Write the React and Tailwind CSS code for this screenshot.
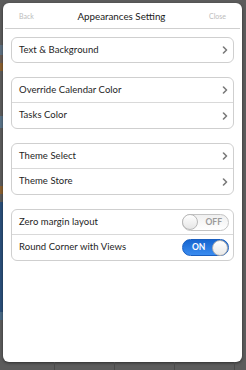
import React from "react";

const Chevron = () => (
  <svg width="6" height="8" viewBox="0 0 6 8" className="shrink-0">
    <path d="M1.5 1 L4.5 4 L1.5 7" fill="none" stroke="#7a7a7a" strokeWidth="1.6" strokeLinecap="round" strokeLinejoin="round" />
  </svg>
);

const Row = ({ label, last, h = "h-[25px]" }) => (
  <div className={`flex items-center justify-between ${h} pl-[7px] pr-[5px] ${last ? "" : "border-b border-[#d9d9d9]"}`}>
    <span className="text-[9.5px] text-[#1e1e1e] tracking-[0.05px]">{label}</span>
    <Chevron />
  </div>
);

const Toggle = ({ on }) =>
  on ? (
    <div className="flex items-center justify-between w-[47px] h-[17px] rounded-full bg-gradient-to-b from-[#1565d0] to-[#3a8cf0] border border-[#1a5fc0] pl-[9px] pr-0">
      <span className="text-[8.5px] font-bold text-white leading-none">ON</span>
      <div className="w-[16px] h-[16px] rounded-full bg-gradient-to-b from-white to-[#e8e8e8] border border-[#b0b0b0]" />
    </div>
  ) : (
    <div className="flex items-center justify-between w-[47px] h-[17px] rounded-full bg-gradient-to-b from-[#f0f0f0] to-white border border-[#c4c4c4] pr-[6px]">
      <div className="w-[16px] h-[16px] -ml-px rounded-full bg-gradient-to-b from-white to-[#e6e6e6] border border-[#b8b8b8]" />
      <span className="text-[8.5px] font-bold text-[#9a9a9a] leading-none">OFF</span>
    </div>
  );

const SwitchRow = ({ label, on, last }) => (
  <div className={`flex items-center justify-between h-[25px] pl-[7px] pr-[4px] ${last ? "" : "border-b border-[#d9d9d9]"}`}>
    <span className="text-[9.5px] text-[#1e1e1e] tracking-[0.05px]">{label}</span>
    <Toggle on={on} />
  </div>
);

const Group = ({ children }) => (
  <div className="mx-[8px] border border-[#cfcfcf] rounded-[6px] bg-white overflow-hidden">{children}</div>
);

export default function App() {
  return (
    <div
      className="w-[246px] h-[370px] bg-[#5c5c5c] flex flex-col overflow-hidden"
      style={{ fontFamily: "Lato, 'Noto Sans', sans-serif" }}
    >
      <div className="h-[3px] shrink-0" />
      <div className="flex flex-1 min-h-0">
        <div className="w-[3px] shrink-0 flex flex-col">
          <div className="h-[42px]" />
          <div className="h-[10px] bg-[#5e7080]" />
          <div className="h-[8px] bg-[#6a5d55]" />
          <div className="h-[8px] bg-[#8a6030]" />
          <div className="h-[45px]" />
          <div className="h-[12px] bg-[#5a7488]" />
          <div className="h-[58px]" />
          <div className="h-[8px] bg-[#8a6030]" />
          <div className="h-[8px]" />
          <div className="h-[110px] bg-[#2a4f7a]" />
          <div className="h-[8px] bg-[#4a6a86]" />
        </div>
        <div className="w-[239px] shrink-0 bg-white rounded-[6px] shadow-[0_1px_3px_rgba(0,0,0,0.5)] flex flex-col">
          <div className="flex items-center justify-between h-[26px] px-[14px] mx-[2px] border-b border-[#cfcfcf]">
            <span className="text-[7px] text-[#bcbcbc] pt-[2px]">Back</span>
            <span className="text-[9.8px] text-[#1a1a1a] pt-[2px]">Appearances Setting</span>
            <span className="text-[7px] text-[#bcbcbc] pt-[2px]">Close</span>
          </div>
          <div className="h-[8px]" />
          <Group>
            <Row label="Text & Background" last h="h-[24px]" />
          </Group>
          <div className="h-[14px]" />
          <Group>
            <Row label="Override Calendar Color" />
            <Row label="Tasks Color" last />
          </Group>
          <div className="h-[14px]" />
          <Group>
            <Row label="Theme Select" />
            <Row label="Theme Store" last />
          </Group>
          <div className="h-[14px]" />
          <Group>
            <SwitchRow label="Zero margin layout" on={false} />
            <SwitchRow label="Round Corner with Views" on last />
          </Group>
        </div>
        <div className="w-[4px] shrink-0" />
      </div>
      <div className="h-[8px] shrink-0 flex">
        <div className="w-[55px] border-r border-[#4a4a4a]" />
        <div className="w-[60px] border-r border-[#4a4a4a]" />
        <div className="w-[60px] border-r border-[#4a4a4a]" />
        <div className="w-[60px] border-r border-[#4a4a4a]" />
      </div>
    </div>
  );
}
